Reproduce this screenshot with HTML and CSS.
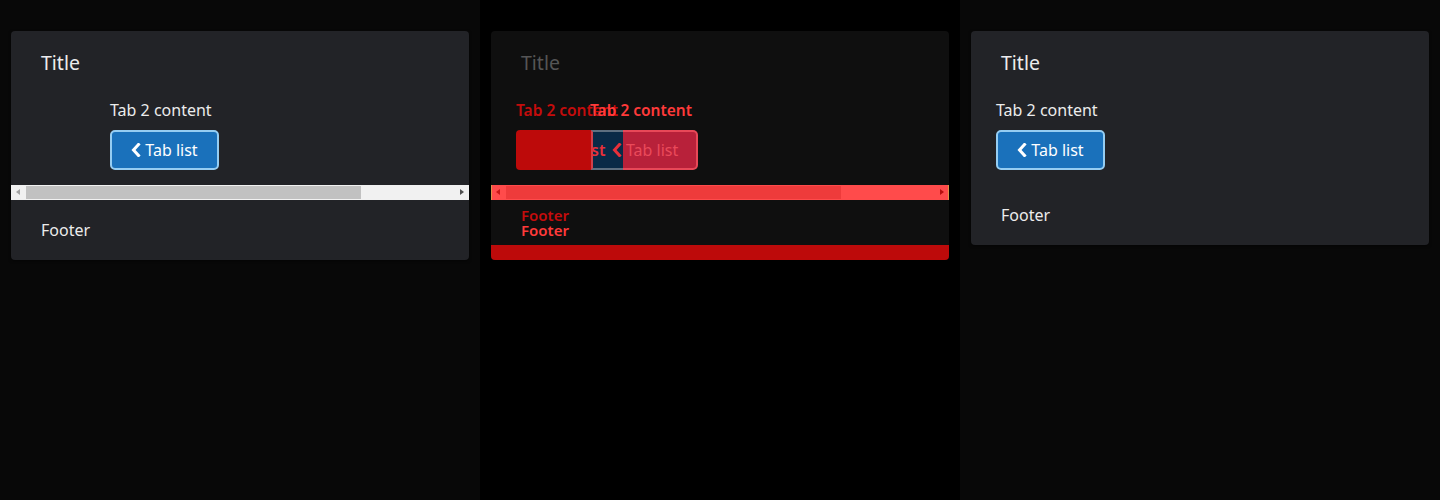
FILE: index.html
```html
<!DOCTYPE html>
<html>
<head>
<meta charset="utf-8">
<link rel="stylesheet" href="styles.css">
</head>
<body>
<div class="panels">
  <section class="panel panel-actual">
    <div class="card">
      <div class="card-title">Title</div>
      <div class="scroller">
        <div class="card-body body-shifted">
          <div class="tab-text">Tab 2 content</div>
          <button class="tab-btn"><svg class="chev" width="10" height="14" viewBox="0 0 10 14"><polyline points="7.5,1.5 2.5,7 7.5,12.5" fill="none" stroke="#ffffff" stroke-width="3" stroke-linecap="square"/></svg>Tab list</button>
        </div>
        <div class="fake-scrollbar">
          <span class="sb-arrow sb-left"></span>
          <span class="sb-thumb"></span>
          <span class="sb-arrow sb-right"></span>
        </div>
      </div>
      <div class="card-footer">Footer</div>
    </div>
  </section>

  <section class="panel panel-diff">
    <div class="card card-diff">
      <div class="card-title title-dim">Title</div>
      <div class="diff-canvas">
        <span class="d-text d-exp">Tab 2 content</span>
        <span class="d-text d-act">Tab 2 content</span>
        <span class="d-btn-exp"></span>
        <span class="d-btn-overlap"><span class="d-st">st</span><svg class="d-chev" width="10" height="14" viewBox="0 0 10 14"><polyline points="7.5,1.5 2.5,7 7.5,12.5" fill="none" stroke="#e8303a" stroke-width="3" stroke-linecap="square"/></svg></span>
        <span class="d-btn-act">Tab list</span>
        <div class="d-scroll">
          <span class="d-sb-left"></span>
          <span class="d-sb-thumb"></span>
          <span class="d-sb-right"></span>
        </div>
        <span class="d-foot d-foot-exp">Footer</span>
        <span class="d-foot d-foot-act">Footer</span>
        <span class="d-bottom"></span>
      </div>
    </div>
  </section>

  <section class="panel panel-expected">
    <div class="card">
      <div class="card-title">Title</div>
      <div class="card-body">
        <div class="tab-text">Tab 2 content</div>
        <button class="tab-btn"><svg class="chev" width="10" height="14" viewBox="0 0 10 14"><polyline points="7.5,1.5 2.5,7 7.5,12.5" fill="none" stroke="#ffffff" stroke-width="3" stroke-linecap="square"/></svg>Tab list</button>
      </div>
      <div class="card-footer">Footer</div>
    </div>
  </section>
</div>
</body>
</html>
```

FILE: styles.css
```css
* { box-sizing: border-box; }
html, body { margin: 0; padding: 0; }
body {
  width: 1440px;
  height: 500px;
  overflow: hidden;
  font-family: "Noto Sans", "Open Sans", sans-serif;
  background: #000;
}
.panels {
  display: grid;
  grid-template-columns: 480px 480px 480px;
  height: 500px;
}
.panel {
  padding: 31px 11px 0 11px;
}
.panel-actual, .panel-expected { background: #080808; }
.panel-diff { background: #000000; }

.card {
  background: #222327;
  border-radius: 4px;
  box-shadow: 0 1px 3px rgba(0,0,0,0.5);
  color: #ececec;
}
.card-title {
  font-size: 19.5px;
  line-height: 24px;
  padding: 20px 30px 0 30px;
  color: #ececec;
}
.card-body {
  padding: 25px 25px 15px 25px;
  display: flex;
  flex-direction: column;
  align-items: flex-start;
  gap: 10px;
}
.body-shifted { padding-left: 99px; }
.tab-text {
  font-size: 16px;
  line-height: 20px;
  color: #ececec;
}
.tab-btn {
  height: 40px;
  width: 109px;
  background: #1a71bb;
  border: 2px solid #95cdf2;
  border-radius: 5px;
  color: #ffffff;
  font-family: "Noto Sans", "Open Sans", sans-serif;
  font-size: 16px;
  display: flex;
  align-items: center;
  justify-content: center;
  gap: 4px;
  padding: 0 0 1px 0;
}
.chev { display: block; }
.card-footer {
  font-size: 16px;
  line-height: 20px;
  padding: 20px 30px 20px 30px;
  color: #ececec;
}

/* fake scrollbar */
.fake-scrollbar {
  height: 15px;
  background: #f1f1f1;
  display: flex;
  align-items: center;
  position: relative;
}
.sb-thumb {
  margin-left: 15px;
  width: 335px;
  height: 13px;
  background: #c1c1c1;
}
.sb-arrow {
  position: absolute;
  top: 4px;
  width: 0; height: 0;
  border-top: 3.5px solid transparent;
  border-bottom: 3.5px solid transparent;
}
.sb-left { left: 5px; border-right: 4px solid #a3a3a3; }
.sb-right { right: 5px; border-left: 4px solid #505050; }

/* diff panel */
.card-diff {
  background: #0f0f0f;
  height: 229px;
  position: relative;
  overflow: hidden;
}
.title-dim { color: #555555; }
.diff-canvas {
  position: absolute;
  inset: 0;
}
.d-text {
  position: absolute;
  top: 69px;
  font-size: 15.5px;
  line-height: 20px;
  font-weight: 600;
  white-space: nowrap;
}
.d-exp { left: 25px; color: #c40c0c; }
.d-act { left: 99px; color: #ff3a3a; }
.d-btn-exp {
  position: absolute;
  left: 25px; top: 99px;
  width: 75px; height: 40px;
  background: #bd0a0a;
  border-radius: 4px 0 0 4px;
}
.d-btn-overlap {
  position: absolute;
  left: 100px; top: 99px;
  width: 33px; height: 40px;
  background: #0a2a47;
  border-top: 2px solid #5e6f80;
  border-bottom: 2px solid #5e6f80;
  border-left: 2px solid #d0404a;
  display: flex;
  align-items: center;
  font-size: 16px;
  font-weight: 600;
  color: #e8303a;
}
.d-st { margin-left: -2px; }
.d-chev { margin-left: 7px; }
.d-btn-act {
  position: absolute;
  left: 132px; top: 99px;
  width: 75px; height: 40px;
  background: #b8213a;
  border: 2px solid #e84858;
  border-left: none;
  border-radius: 0 5px 5px 0;
  color: #ea4a5a;
  font-size: 16px;
  line-height: 36px;
  padding-left: 3px;
}
.d-scroll {
  position: absolute;
  left: 0; right: 0; top: 154px;
  height: 15px;
  background: #ff4b4b;
  border-left: 1px solid #e0904a;
  border-right: 1px solid #e0904a;
}
.d-sb-thumb {
  position: absolute;
  left: 14px; top: 1px;
  width: 335px; height: 13px;
  background: #ee3b3b;
}
.d-sb-left {
  position: absolute;
  left: 4px; top: 4px;
  width: 0; height: 0;
  border-top: 3.5px solid transparent;
  border-bottom: 3.5px solid transparent;
  border-right: 4px solid #c81818;
}
.d-sb-right {
  position: absolute;
  right: 4px; top: 4px;
  width: 0; height: 0;
  border-top: 3.5px solid transparent;
  border-bottom: 3.5px solid transparent;
  border-left: 4px solid #b80e0e;
}
.d-foot {
  position: absolute;
  left: 30px;
  font-size: 15px;
  line-height: 20px;
  font-weight: 600;
}
.d-foot-exp { top: 174px; color: #c40c0c; }
.d-foot-act { top: 189px; color: #ff3a3a; }
.d-bottom {
  position: absolute;
  left: 0; right: 0; top: 214px;
  height: 15px;
  background: #bd0a0a;
}
```
